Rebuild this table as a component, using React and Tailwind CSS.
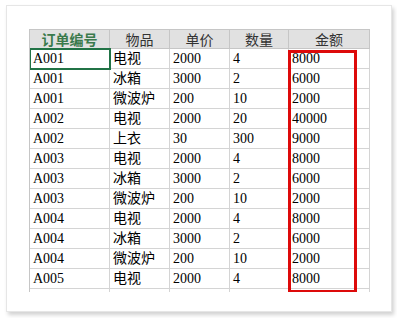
import React from "react";

const rows = [
  ["A001", "电视", "2000", "4", "8000"],
  ["A001", "冰箱", "3000", "2", "6000"],
  ["A001", "微波炉", "200", "10", "2000"],
  ["A002", "电视", "2000", "20", "40000"],
  ["A002", "上衣", "30", "300", "9000"],
  ["A003", "电视", "2000", "4", "8000"],
  ["A003", "冰箱", "3000", "2", "6000"],
  ["A003", "微波炉", "200", "10", "2000"],
  ["A004", "电视", "2000", "4", "8000"],
  ["A004", "冰箱", "3000", "2", "6000"],
  ["A004", "微波炉", "200", "10", "2000"],
  ["A005", "电视", "2000", "4", "8000"],
];

const widths = ["w-[80px]", "w-[60px]", "w-[60px]", "w-[59px]", "w-[81px]"];
const headers = ["订单编号", "物品", "单价", "数量", "金额"];

const App = () => {
  return (
    <div
      className="w-[397px] h-[318px] bg-white pt-[5px] pl-[6px]"
      style={{ fontFamily: '"Liberation Serif", "Noto Sans CJK SC", serif' }}
    >
      <div className="w-[386px] h-[307px] bg-white border border-[#e6e6e6] shadow-[2px_3px_4px_rgba(0,0,0,0.18)] pt-[23px] pl-[22px]">
        <div className="relative w-[341px] h-[263px] overflow-hidden border-l border-t border-[#c6c6c6]">
          <div className="flex h-[19px] bg-[#e1e1e1] border-b border-[#c6c6c6]">
            {headers.map((h, i) => (
              <div
                key={h}
                className={`${widths[i]} shrink-0 border-r border-[#c6c6c6] flex items-center justify-center text-[14px] leading-none ${
                  i === 0 ? "text-[#3b7a4c] font-bold" : "text-[#333]"
                }`}
                style={{ fontFamily: '"Noto Sans CJK SC", sans-serif' }}
              >
                {h}
              </div>
            ))}
          </div>
          {rows.map((r, ri) => (
            <div key={ri} className="flex h-[20px] border-b border-[#d4d4d4]">
              {r.map((c, ci) => (
                <div
                  key={ci}
                  className={`${widths[ci]} shrink-0 border-r border-[#d4d4d4] flex items-center pl-[3px] text-[14px] leading-none text-black`}
                >
                  {c}
                </div>
              ))}
            </div>
          ))}
          <div className="flex h-[20px]">
            {widths.map((w, i) => (
              <div key={i} className={`${w} shrink-0 border-r border-[#d4d4d4]`} />
            ))}
          </div>
          <div className="absolute left-[-1px] top-[18px] w-[82px] h-[22px] border-2 border-[#217346]" />
          <div className="absolute left-[258px] top-[20px] w-[69px] h-[243px] border-[3px] border-[#dd0a0a]" />
        </div>
      </div>
    </div>
  );
};

export default App;
